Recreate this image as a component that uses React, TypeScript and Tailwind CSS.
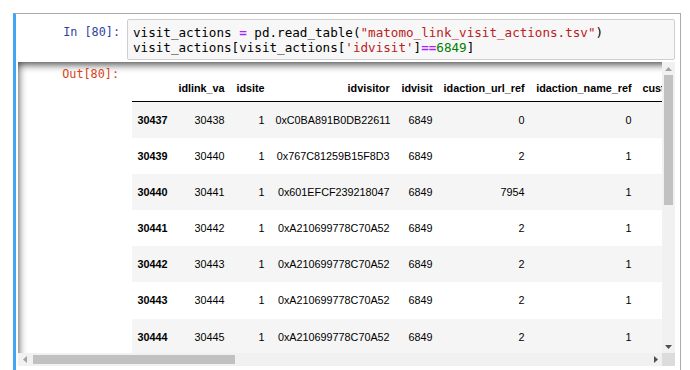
import React from "react";

type Row = [string, string, string, string, string, string, string, string];

const rows: Row[] = [
  ["30437", "30438", "1", "0xC0BA891B0DB22611", "6849", "0", "0", "NaN"],
  ["30439", "30440", "1", "0x767C81259B15F8D3", "6849", "2", "1", "NaN"],
  ["30440", "30441", "1", "0x601EFCF239218047", "6849", "7954", "1", "NaN"],
  ["30441", "30442", "1", "0xA210699778C70A52", "6849", "2", "1", "NaN"],
  ["30442", "30443", "1", "0xA210699778C70A52", "6849", "2", "1", "NaN"],
  ["30443", "30444", "1", "0xA210699778C70A52", "6849", "2", "1", "NaN"],
  ["30444", "30445", "1", "0xA210699778C70A52", "6849", "2", "1", "NaN"],
];

const headers = [
  "",
  "idlink_va",
  "idsite",
  "idvisitor",
  "idvisit",
  "idaction_url_ref",
  "idaction_name_ref",
  "custom_float",
];

function Tri({ dir, color }: { dir: "up" | "down" | "left" | "right"; color: string }) {
  const pts =
    dir === "up"
      ? "0,4 3.5,0 7,4"
      : dir === "down"
      ? "0,0 7,0 3.5,4"
      : dir === "left"
      ? "4,0 4,7 0,3.5"
      : "0,0 0,7 4,3.5";
  const w = dir === "up" || dir === "down" ? 7 : 4;
  const h = dir === "up" || dir === "down" ? 4 : 7;
  return (
    <svg width={w} height={h} viewBox={`0 0 ${w} ${h}`}>
      <polygon points={pts} fill={color} />
    </svg>
  );
}

export default function App() {
  return (
    <div className="w-[690px] h-[370px] bg-white overflow-hidden">
      <div className="ml-[13px] mt-[13px] w-[668px] h-[420px] border border-[#ababab] border-l-[3px] border-l-[#42a5f5] pt-[5px] pr-[5px]">
        {/* Input */}
        <div className="flex">
          <div className="w-[111px] shrink-0 pr-[7px] pt-[6px] text-right text-[11.8px] leading-[15px] text-[#303f9f] font-['DejaVu_Sans_Mono',monospace]">
            In&nbsp;[80]:
          </div>
          <div className="flex-1 h-[41px] bg-[#f7f7f7] border border-[#cfcfcf] rounded-[2px] pl-[5px] pt-[4.5px] font-['DejaVu_Sans_Mono',monospace] text-[12.6px] leading-[15.3px] text-black whitespace-pre">
            <div>
              visit_actions <span className="text-[#aa22ff] font-bold">=</span> pd.read_table(
              <span className="text-[#ba2121]">"matomo_link_visit_actions.tsv"</span>)
            </div>
            <div>
              visit_actions[visit_actions[<span className="text-[#ba2121]">'idvisit'</span>]
              <span className="text-[#aa22ff] font-bold">==</span>
              <span className="text-[#008000]">6849</span>]
            </div>
          </div>
        </div>

        {/* Output */}
        <div className="mt-[2px] ml-[2px] h-[304px] flex flex-col shadow-[inset_0_2px_8px_rgba(0,0,0,0.8)]">
          <div className="flex flex-1 min-h-0">
            <div className="flex flex-1 min-w-0 overflow-hidden">
              <div className="w-[109px] shrink-0 pr-[8px] pt-[5px] text-right text-[11.8px] leading-[15px] text-[#d84315] font-['DejaVu_Sans_Mono',monospace]">
                Out[80]:
              </div>
              <div className="pl-[5px] pt-[14px] min-w-0 overflow-hidden">
                <table className="table-fixed border-collapse w-[580px] font-['Liberation_Sans',Arial,sans-serif] text-[10.8px] text-black">
                  <colgroup>
                    <col className="w-[40px]" />
                    <col className="w-[58px]" />
                    <col className="w-[40px]" />
                    <col className="w-[125px]" />
                    <col className="w-[43px]" />
                    <col className="w-[92px]" />
                    <col className="w-[107px]" />
                    <col className="w-[75px]" />
                  </colgroup>
                  <thead>
                    <tr className="h-[25.5px]">
                      {headers.map((h, i) => (
                        <th
                          key={i}
                          className="px-[5.4px] text-right font-bold whitespace-nowrap border-b border-black align-middle"
                        >
                          {h}
                        </th>
                      ))}
                    </tr>
                  </thead>
                  <tbody>
                    {rows.map((r, ri) => (
                      <tr key={ri} className={"h-[36.2px] " + (ri % 2 === 0 ? "bg-[#f5f5f5]" : "bg-white")}>
                        {r.map((c, ci) =>
                          ci === 0 ? (
                            <th key={ci} className="px-[5.4px] text-left font-bold whitespace-nowrap align-middle">
                              {c}
                            </th>
                          ) : (
                            <td key={ci} className="px-[5.4px] text-right whitespace-nowrap align-middle">
                              {c}
                            </td>
                          )
                        )}
                      </tr>
                    ))}
                  </tbody>
                </table>
              </div>
            </div>
            {/* vertical scrollbar */}
            <div className="w-[13px] shrink-0 bg-[#f1f1f1] flex flex-col items-center">
              <div className="h-[13px] flex items-center justify-center">
                <Tri dir="up" color="#a3a3a3" />
              </div>
              <div className="w-[9px] h-[130px] bg-[#c1c1c1]" />
              <div className="flex-1" />
              <div className="h-[13px] flex items-center justify-center">
                <Tri dir="down" color="#505050" />
              </div>
            </div>
          </div>
          {/* horizontal scrollbar */}
          <div className="flex h-[13px] shrink-0">
            <div className="flex-1 bg-[#f1f1f1] flex items-center">
              <div className="w-[14px] h-[13px] flex items-center justify-center">
                <Tri dir="left" color="#a3a3a3" />
              </div>
              <div className="ml-[1px] w-[202px] h-[9px] bg-[#c1c1c1]" />
              <div className="flex-1" />
              <div className="w-[13px] h-[13px] flex items-center justify-center">
                <Tri dir="right" color="#505050" />
              </div>
            </div>
            <div className="w-[13px] h-[13px] bg-[#dcdcdc]" />
          </div>
        </div>
      </div>
    </div>
  );
}
